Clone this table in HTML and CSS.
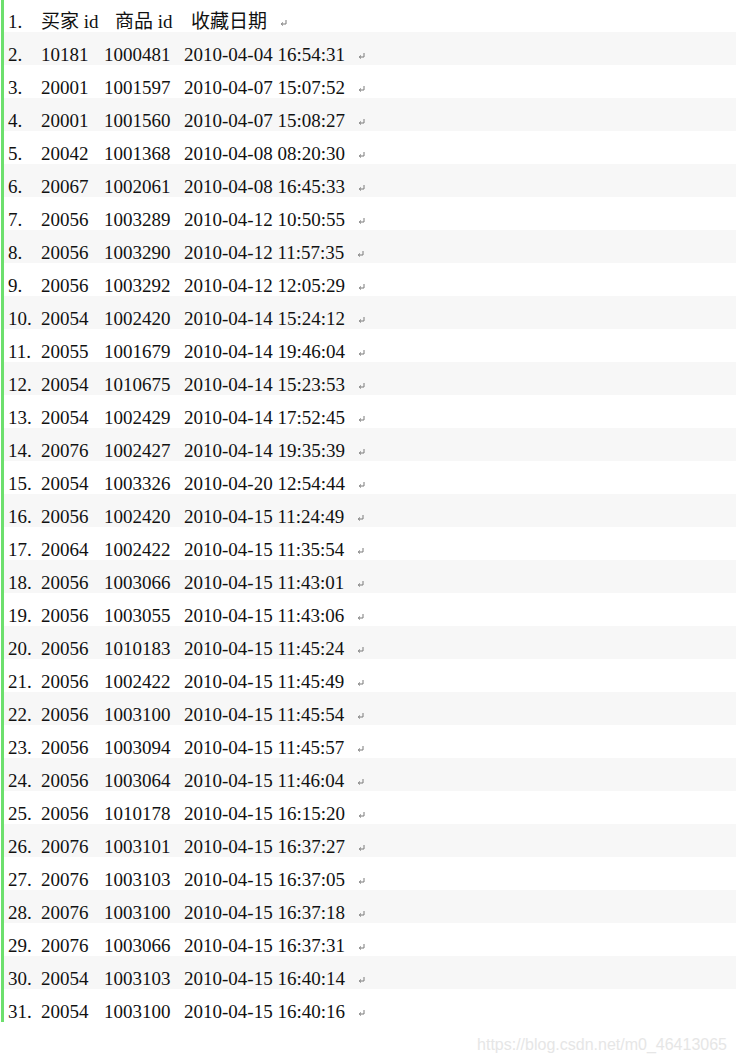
FILE: index.html
```html
<!DOCTYPE html>
<html lang="zh">
<head>
<meta charset="utf-8">
<link rel="stylesheet" href="styles.css">
</head>
<body>
<div class="doc">
  <div class="row head">
    <span class="no">1.</span><span class="c1">买家 id</span><span class="c2">商品 id</span><span class="c3">收藏日期</span><svg class="ret" viewBox="0 0 7 7"><path d="M6 0V4H1.5M3 2.5L1.2 4L3 5.5" fill="none" stroke="#7a7a7a" stroke-width="1"/></svg>
  </div>
  <div class="row"><span class="no">2.</span><span class="c1">10181</span><span class="c2">1000481</span><span class="c3">2010-04-04 16:54:31</span><svg class="ret" viewBox="0 0 7 7"><path d="M6 0V4H1.5M3 2.5L1.2 4L3 5.5" fill="none" stroke="#7a7a7a" stroke-width="1"/></svg></div>
  <div class="row"><span class="no">3.</span><span class="c1">20001</span><span class="c2">1001597</span><span class="c3">2010-04-07 15:07:52</span><svg class="ret" viewBox="0 0 7 7"><path d="M6 0V4H1.5M3 2.5L1.2 4L3 5.5" fill="none" stroke="#7a7a7a" stroke-width="1"/></svg></div>
  <div class="row"><span class="no">4.</span><span class="c1">20001</span><span class="c2">1001560</span><span class="c3">2010-04-07 15:08:27</span><svg class="ret" viewBox="0 0 7 7"><path d="M6 0V4H1.5M3 2.5L1.2 4L3 5.5" fill="none" stroke="#7a7a7a" stroke-width="1"/></svg></div>
  <div class="row"><span class="no">5.</span><span class="c1">20042</span><span class="c2">1001368</span><span class="c3">2010-04-08 08:20:30</span><svg class="ret" viewBox="0 0 7 7"><path d="M6 0V4H1.5M3 2.5L1.2 4L3 5.5" fill="none" stroke="#7a7a7a" stroke-width="1"/></svg></div>
  <div class="row"><span class="no">6.</span><span class="c1">20067</span><span class="c2">1002061</span><span class="c3">2010-04-08 16:45:33</span><svg class="ret" viewBox="0 0 7 7"><path d="M6 0V4H1.5M3 2.5L1.2 4L3 5.5" fill="none" stroke="#7a7a7a" stroke-width="1"/></svg></div>
  <div class="row"><span class="no">7.</span><span class="c1">20056</span><span class="c2">1003289</span><span class="c3">2010-04-12 10:50:55</span><svg class="ret" viewBox="0 0 7 7"><path d="M6 0V4H1.5M3 2.5L1.2 4L3 5.5" fill="none" stroke="#7a7a7a" stroke-width="1"/></svg></div>
  <div class="row"><span class="no">8.</span><span class="c1">20056</span><span class="c2">1003290</span><span class="c3">2010-04-12 11:57:35</span><svg class="ret" viewBox="0 0 7 7"><path d="M6 0V4H1.5M3 2.5L1.2 4L3 5.5" fill="none" stroke="#7a7a7a" stroke-width="1"/></svg></div>
  <div class="row"><span class="no">9.</span><span class="c1">20056</span><span class="c2">1003292</span><span class="c3">2010-04-12 12:05:29</span><svg class="ret" viewBox="0 0 7 7"><path d="M6 0V4H1.5M3 2.5L1.2 4L3 5.5" fill="none" stroke="#7a7a7a" stroke-width="1"/></svg></div>
  <div class="row"><span class="no">10.</span><span class="c1">20054</span><span class="c2">1002420</span><span class="c3">2010-04-14 15:24:12</span><svg class="ret" viewBox="0 0 7 7"><path d="M6 0V4H1.5M3 2.5L1.2 4L3 5.5" fill="none" stroke="#7a7a7a" stroke-width="1"/></svg></div>
  <div class="row"><span class="no">11.</span><span class="c1">20055</span><span class="c2">1001679</span><span class="c3">2010-04-14 19:46:04</span><svg class="ret" viewBox="0 0 7 7"><path d="M6 0V4H1.5M3 2.5L1.2 4L3 5.5" fill="none" stroke="#7a7a7a" stroke-width="1"/></svg></div>
  <div class="row"><span class="no">12.</span><span class="c1">20054</span><span class="c2">1010675</span><span class="c3">2010-04-14 15:23:53</span><svg class="ret" viewBox="0 0 7 7"><path d="M6 0V4H1.5M3 2.5L1.2 4L3 5.5" fill="none" stroke="#7a7a7a" stroke-width="1"/></svg></div>
  <div class="row"><span class="no">13.</span><span class="c1">20054</span><span class="c2">1002429</span><span class="c3">2010-04-14 17:52:45</span><svg class="ret" viewBox="0 0 7 7"><path d="M6 0V4H1.5M3 2.5L1.2 4L3 5.5" fill="none" stroke="#7a7a7a" stroke-width="1"/></svg></div>
  <div class="row"><span class="no">14.</span><span class="c1">20076</span><span class="c2">1002427</span><span class="c3">2010-04-14 19:35:39</span><svg class="ret" viewBox="0 0 7 7"><path d="M6 0V4H1.5M3 2.5L1.2 4L3 5.5" fill="none" stroke="#7a7a7a" stroke-width="1"/></svg></div>
  <div class="row"><span class="no">15.</span><span class="c1">20054</span><span class="c2">1003326</span><span class="c3">2010-04-20 12:54:44</span><svg class="ret" viewBox="0 0 7 7"><path d="M6 0V4H1.5M3 2.5L1.2 4L3 5.5" fill="none" stroke="#7a7a7a" stroke-width="1"/></svg></div>
  <div class="row"><span class="no">16.</span><span class="c1">20056</span><span class="c2">1002420</span><span class="c3">2010-04-15 11:24:49</span><svg class="ret" viewBox="0 0 7 7"><path d="M6 0V4H1.5M3 2.5L1.2 4L3 5.5" fill="none" stroke="#7a7a7a" stroke-width="1"/></svg></div>
  <div class="row"><span class="no">17.</span><span class="c1">20064</span><span class="c2">1002422</span><span class="c3">2010-04-15 11:35:54</span><svg class="ret" viewBox="0 0 7 7"><path d="M6 0V4H1.5M3 2.5L1.2 4L3 5.5" fill="none" stroke="#7a7a7a" stroke-width="1"/></svg></div>
  <div class="row"><span class="no">18.</span><span class="c1">20056</span><span class="c2">1003066</span><span class="c3">2010-04-15 11:43:01</span><svg class="ret" viewBox="0 0 7 7"><path d="M6 0V4H1.5M3 2.5L1.2 4L3 5.5" fill="none" stroke="#7a7a7a" stroke-width="1"/></svg></div>
  <div class="row"><span class="no">19.</span><span class="c1">20056</span><span class="c2">1003055</span><span class="c3">2010-04-15 11:43:06</span><svg class="ret" viewBox="0 0 7 7"><path d="M6 0V4H1.5M3 2.5L1.2 4L3 5.5" fill="none" stroke="#7a7a7a" stroke-width="1"/></svg></div>
  <div class="row"><span class="no">20.</span><span class="c1">20056</span><span class="c2">1010183</span><span class="c3">2010-04-15 11:45:24</span><svg class="ret" viewBox="0 0 7 7"><path d="M6 0V4H1.5M3 2.5L1.2 4L3 5.5" fill="none" stroke="#7a7a7a" stroke-width="1"/></svg></div>
  <div class="row"><span class="no">21.</span><span class="c1">20056</span><span class="c2">1002422</span><span class="c3">2010-04-15 11:45:49</span><svg class="ret" viewBox="0 0 7 7"><path d="M6 0V4H1.5M3 2.5L1.2 4L3 5.5" fill="none" stroke="#7a7a7a" stroke-width="1"/></svg></div>
  <div class="row"><span class="no">22.</span><span class="c1">20056</span><span class="c2">1003100</span><span class="c3">2010-04-15 11:45:54</span><svg class="ret" viewBox="0 0 7 7"><path d="M6 0V4H1.5M3 2.5L1.2 4L3 5.5" fill="none" stroke="#7a7a7a" stroke-width="1"/></svg></div>
  <div class="row"><span class="no">23.</span><span class="c1">20056</span><span class="c2">1003094</span><span class="c3">2010-04-15 11:45:57</span><svg class="ret" viewBox="0 0 7 7"><path d="M6 0V4H1.5M3 2.5L1.2 4L3 5.5" fill="none" stroke="#7a7a7a" stroke-width="1"/></svg></div>
  <div class="row"><span class="no">24.</span><span class="c1">20056</span><span class="c2">1003064</span><span class="c3">2010-04-15 11:46:04</span><svg class="ret" viewBox="0 0 7 7"><path d="M6 0V4H1.5M3 2.5L1.2 4L3 5.5" fill="none" stroke="#7a7a7a" stroke-width="1"/></svg></div>
  <div class="row"><span class="no">25.</span><span class="c1">20056</span><span class="c2">1010178</span><span class="c3">2010-04-15 16:15:20</span><svg class="ret" viewBox="0 0 7 7"><path d="M6 0V4H1.5M3 2.5L1.2 4L3 5.5" fill="none" stroke="#7a7a7a" stroke-width="1"/></svg></div>
  <div class="row"><span class="no">26.</span><span class="c1">20076</span><span class="c2">1003101</span><span class="c3">2010-04-15 16:37:27</span><svg class="ret" viewBox="0 0 7 7"><path d="M6 0V4H1.5M3 2.5L1.2 4L3 5.5" fill="none" stroke="#7a7a7a" stroke-width="1"/></svg></div>
  <div class="row"><span class="no">27.</span><span class="c1">20076</span><span class="c2">1003103</span><span class="c3">2010-04-15 16:37:05</span><svg class="ret" viewBox="0 0 7 7"><path d="M6 0V4H1.5M3 2.5L1.2 4L3 5.5" fill="none" stroke="#7a7a7a" stroke-width="1"/></svg></div>
  <div class="row"><span class="no">28.</span><span class="c1">20076</span><span class="c2">1003100</span><span class="c3">2010-04-15 16:37:18</span><svg class="ret" viewBox="0 0 7 7"><path d="M6 0V4H1.5M3 2.5L1.2 4L3 5.5" fill="none" stroke="#7a7a7a" stroke-width="1"/></svg></div>
  <div class="row"><span class="no">29.</span><span class="c1">20076</span><span class="c2">1003066</span><span class="c3">2010-04-15 16:37:31</span><svg class="ret" viewBox="0 0 7 7"><path d="M6 0V4H1.5M3 2.5L1.2 4L3 5.5" fill="none" stroke="#7a7a7a" stroke-width="1"/></svg></div>
  <div class="row"><span class="no">30.</span><span class="c1">20054</span><span class="c2">1003103</span><span class="c3">2010-04-15 16:40:14</span><svg class="ret" viewBox="0 0 7 7"><path d="M6 0V4H1.5M3 2.5L1.2 4L3 5.5" fill="none" stroke="#7a7a7a" stroke-width="1"/></svg></div>
  <div class="row"><span class="no">31.</span><span class="c1">20054</span><span class="c2">1003100</span><span class="c3">2010-04-15 16:40:16</span><svg class="ret" viewBox="0 0 7 7"><path d="M6 0V4H1.5M3 2.5L1.2 4L3 5.5" fill="none" stroke="#7a7a7a" stroke-width="1"/></svg></div>
</div>
<div class="mark">https://blog.csdn.net/m0_46413065</div>
</body>
</html>
```

FILE: styles.css
```css
html, body {
  margin: 0;
  padding: 0;
  background: #ffffff;
}

body {
  font-family: "Liberation Serif", "Noto Sans CJK SC", serif;
  font-size: 19px;
  color: #111111;
}

.doc {
  margin-left: 1px;
  border-left: 3px solid #6ddf6d;
}

.row {
  display: flex;
  align-items: flex-end;
  height: 33px;
  padding-left: 4px;
  line-height: 20px;
  white-space: nowrap;
}

.row:nth-child(even) {
  background: #f7f7f7;
}

.row.head {
  height: 32px;
}

.no {
  width: 33px;
  flex: none;
}

.c1 {
  width: 63px;
  flex: none;
}

.c2 {
  width: 80px;
  flex: none;
}

.c3 {
  flex: none;
}

.head .c1 {
  width: 74px;
}

.head .c2 {
  width: 76px;
}

.ret {
  width: 7px;
  height: 7px;
  margin-left: 13px;
  margin-bottom: 5px;
  flex: none;
}

.mark {
  margin-top: 14px;
  padding-right: 9px;
  text-align: right;
  font-family: "Liberation Sans", sans-serif;
  font-size: 16px;
  color: #e6e6e6;
  line-height: 18px;
}
```
